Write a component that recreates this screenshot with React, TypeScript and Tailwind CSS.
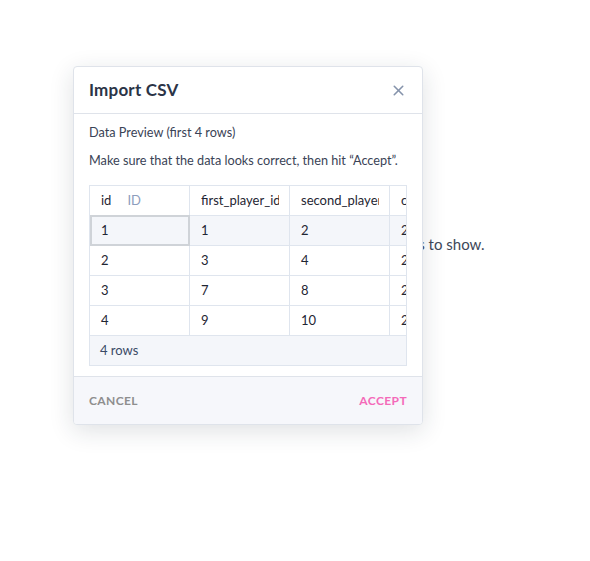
import { X } from "lucide-react";

const cols = ["first_player_id", "second_player", "created_at"];
const rows = [
  ["1", "1", "2", "2"],
  ["2", "3", "4", "2"],
  ["3", "7", "8", "2"],
  ["4", "9", "10", "2"],
];

export default function App() {
  return (
    <div className="relative w-[590px] h-[561px] bg-white font-['Lato',sans-serif] text-[#2d3548]">
      {/* page content behind the dialog */}
      <div className="absolute left-[306px] top-[233px] text-[15px] text-[#3d4759] whitespace-nowrap">
        There are no rows to show.
      </div>

      <div className="absolute left-[73px] top-[66px] w-[350px] bg-white border border-[#dfe3ea] rounded-[4px] shadow-[0_6px_24px_rgba(30,40,60,0.14)] overflow-hidden">
        <div className="h-[47px] flex items-center justify-between px-[15px] border-b border-[#dfe3ea]">
          <h2 className="text-[17px] font-bold tracking-[0.2px] text-[#2b3447]">Import CSV</h2>
          <X className="w-[17px] h-[17px] text-[#8593ab]" strokeWidth={2.2} />
        </div>

        <div className="px-[15px] pt-[10px] pb-[10px] text-[12.7px] text-[#3a4356]">
          <p className="leading-[17px]">Data Preview (first 4 rows)</p>
          <p className="mt-[11px] leading-[17px] whitespace-nowrap">Make sure that the data looks correct, then hit “Accept”.</p>

          <div className="mt-[16px] w-[318px] overflow-hidden border border-[#dfe5ee] text-[13px] text-[#1f2633]">
            <div className="flex w-[420px] h-[30px] border-b border-[#dfe5ee] bg-white">
              <div className="w-[100px] shrink-0 flex items-center px-[11px] border-r border-[#dfe5ee]">
                <span>id</span>
                <span className="ml-[16px] text-[#8c9dbd]">ID</span>
              </div>
              {cols.map((c) => (
                <div
                  key={c}
                  className="w-[100px] shrink-0 flex items-center pl-[11px] pr-[10px] border-r border-[#dfe5ee]"
                >
                  <span className="block overflow-hidden whitespace-nowrap">{c}</span>
                </div>
              ))}
            </div>
            {rows.map((r, i) => (
              <div
                key={i}
                className={`flex w-[420px] h-[30px] border-b border-[#dfe5ee] ${i === 0 ? "bg-[#f4f6fa]" : "bg-white"}`}
              >
                {r.map((v, j) => (
                  <div
                    key={j}
                    className={
                      i === 0 && j === 0
                        ? "w-[100px] shrink-0 flex items-center px-[9px] border-2 border-[#cfd3d8] -my-[1px]"
                        : "w-[100px] shrink-0 flex items-center px-[11px] border-r border-[#dfe5ee]"
                    }
                  >
                    {v}
                  </div>
                ))}
              </div>
            ))}
            <div className="h-[29px] flex items-center px-[10px] bg-[#f4f6fa] text-[#3a4a66]">4 rows</div>
          </div>
        </div>

        <div className="h-[48px] flex items-center justify-between px-[15px] bg-[#f6f7fb] border-t border-[#dfe3ea] text-[12px] font-bold tracking-[0.4px]">
          <button className="text-[#8e8e8e]">CANCEL</button>
          <button className="text-[#f46ab9]">ACCEPT</button>
        </div>
      </div>
    </div>
  );
}
